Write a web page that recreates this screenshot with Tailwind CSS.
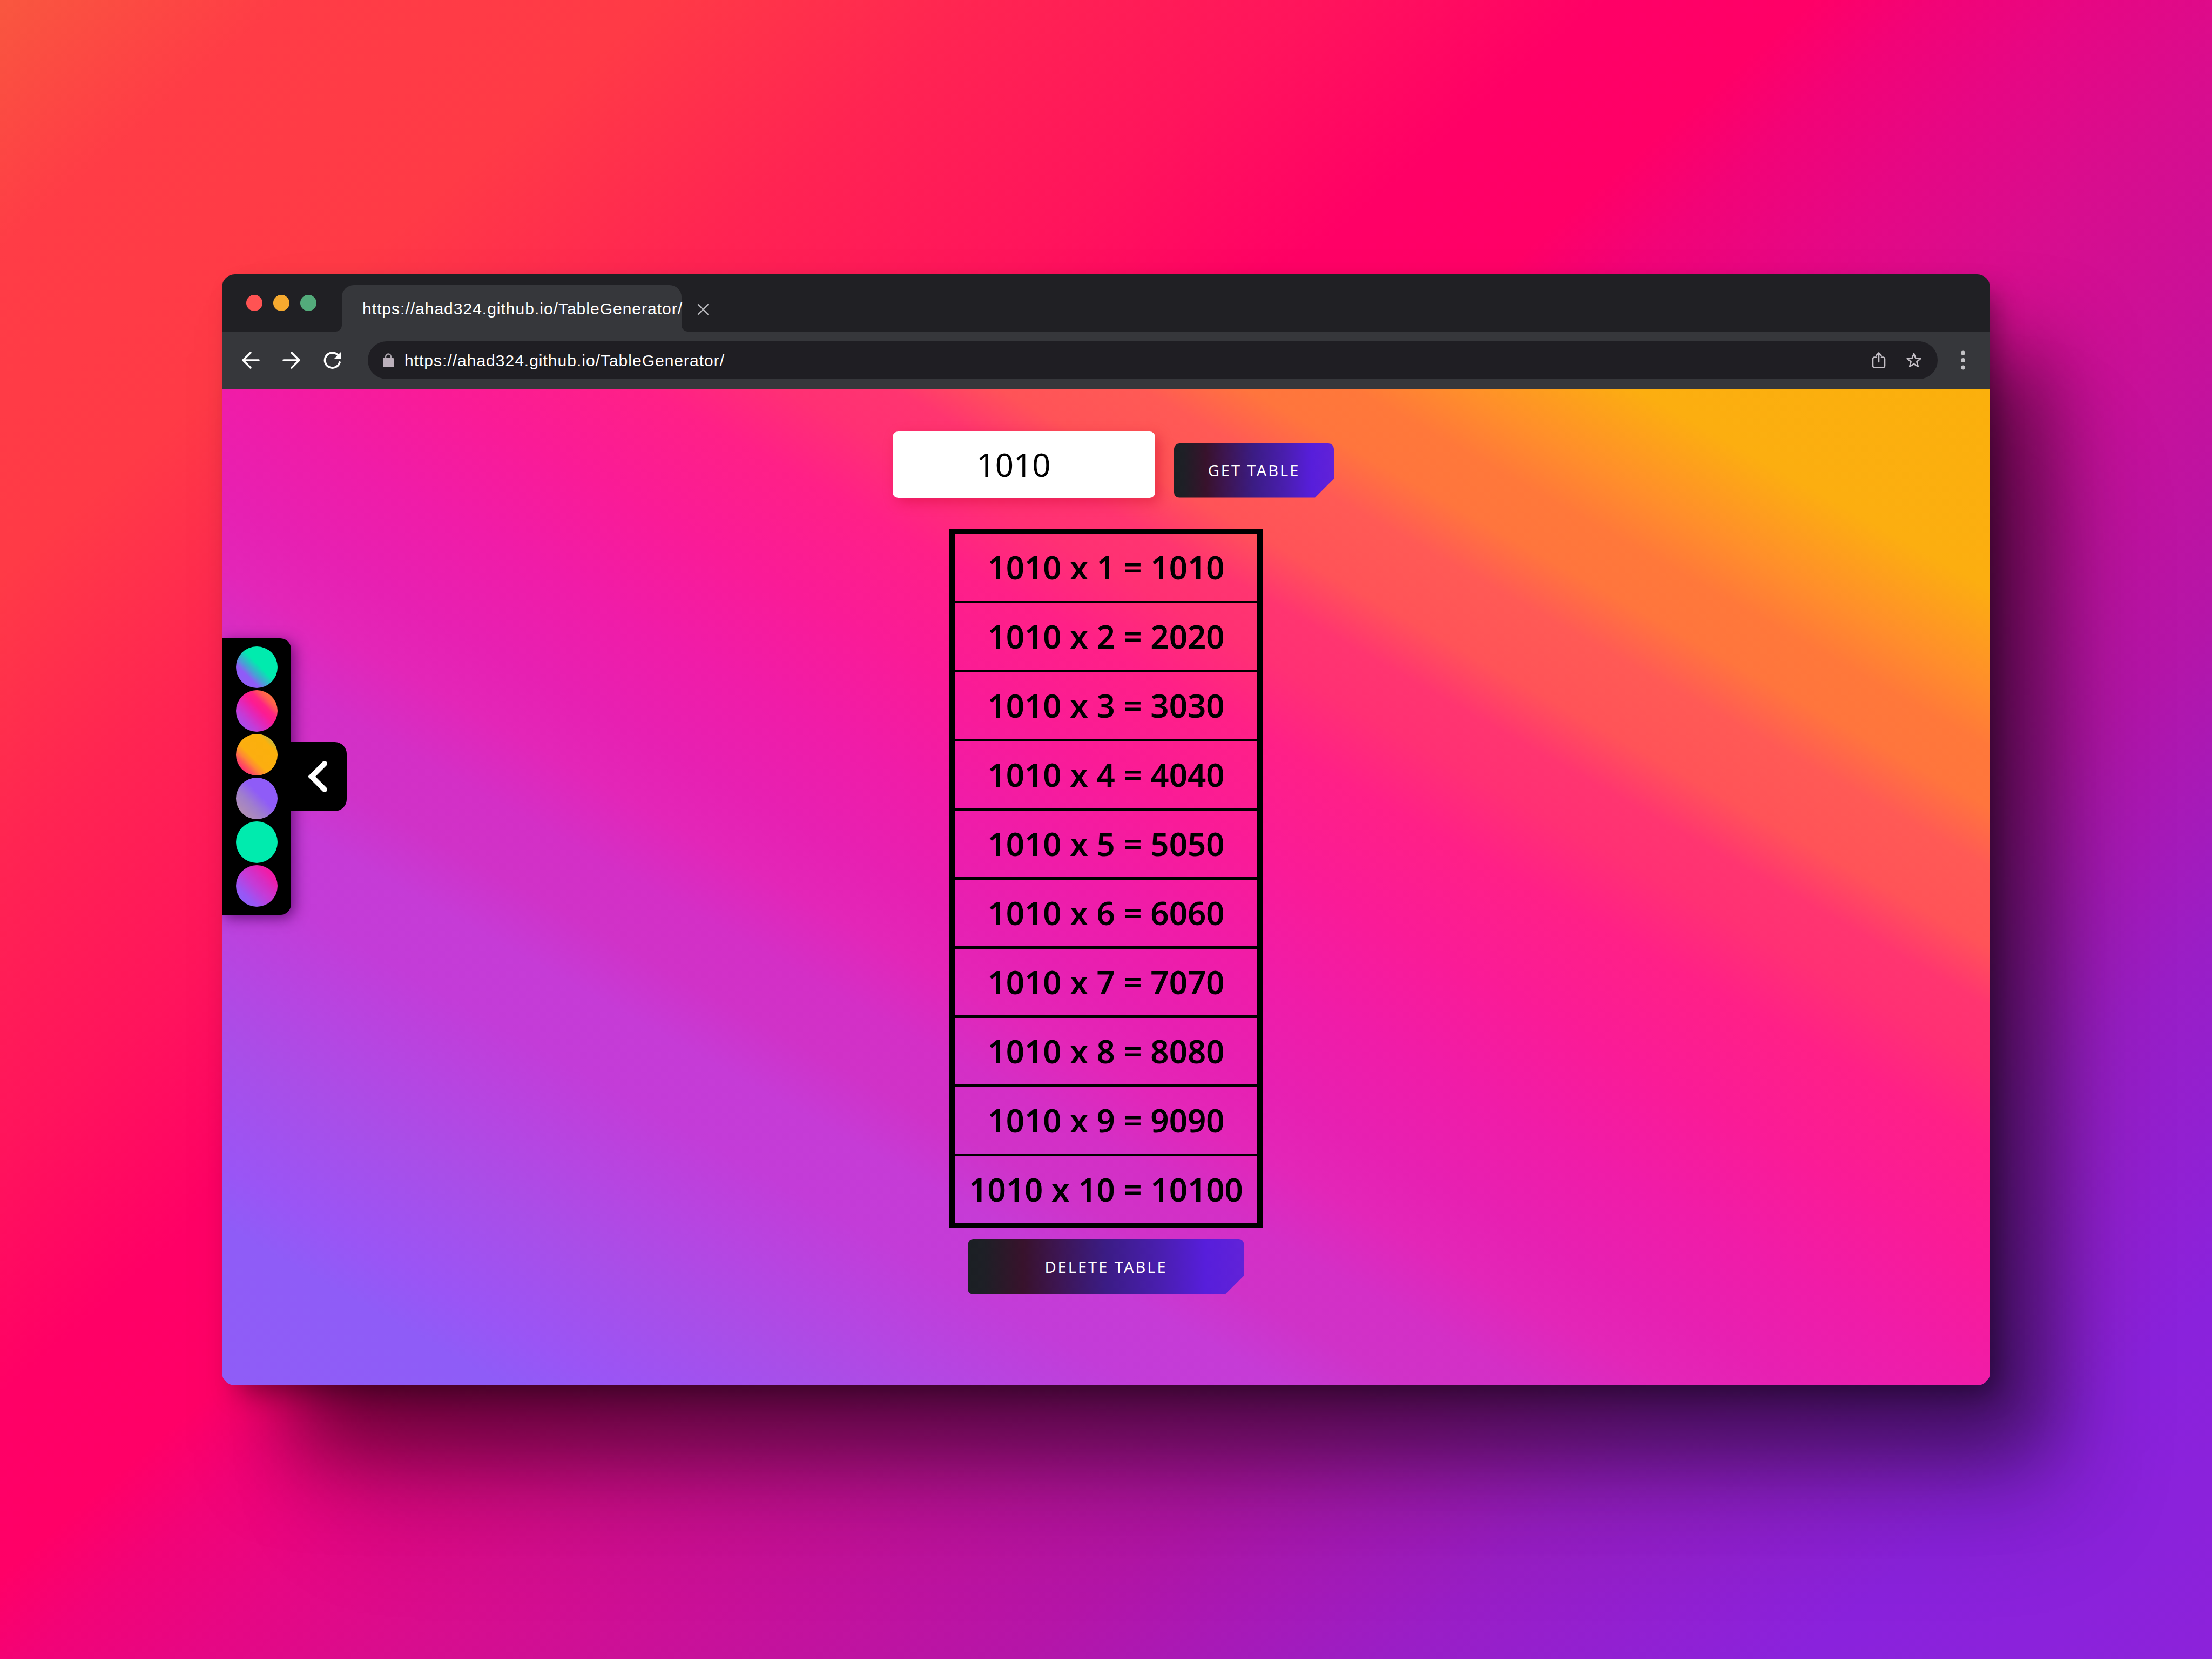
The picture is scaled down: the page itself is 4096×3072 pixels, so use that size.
<!DOCTYPE html>
<html lang="en">
<head>
<meta charset="utf-8">
<title>Table Generator</title>
<script src="https://cdn.jsdelivr.net/npm/@tailwindcss/browser@4"></script>
</head>
<body class="flex min-h-screen items-center px-[411px] font-['Noto_Sans',sans-serif] bg-[linear-gradient(139deg,#f9573f_0%,#ff3c46_7%,#ff3a46_16%,#ff2452_24%,#ff145c_32%,#ff0066_39%,#ff0067_44%,#f20377_47%,#e60784_51%,#d80d8e_56%,#b515a8_71%,#9a1ec6_80%,#8a22dc_90%,#8c22da_100%)]">
<div class="flex w-full flex-col overflow-hidden rounded-[24px] shadow-[20px_24px_50px_-10px_rgba(0,0,0,0.4),115px_135px_160px_-10px_rgba(0,0,0,0.5),180px_270px_200px_-30px_rgba(0,0,0,0.14)]">

  <header class="flex h-[106px] items-start bg-[#202024] pt-5 pl-[45px] font-['Liberation_Sans',sans-serif]">
    <div class="flex gap-5 pt-[18px]">
      <span class="size-[30px] rounded-full bg-[#ff5353]"></span>
      <span class="size-[30px] rounded-full bg-[#f5a92f]"></span>
      <span class="size-[30px] rounded-full bg-[#53ab7b]"></span>
    </div>
    <div class="relative ml-[47px] flex h-[86px] w-[629px] items-center rounded-t-[22px] bg-[#36373b] pt-[2px] pl-[38px]">
      <svg class="absolute bottom-0 -left-3 size-3" viewBox="0 0 12 12"><path d="M12 0v12H0A12 12 0 0 0 12 0Z" fill="#36373b"/></svg>
      <svg class="absolute -right-3 bottom-0 size-3" viewBox="0 0 12 12"><path d="M0 0v12h12A12 12 0 0 1 0 0Z" fill="#36373b"/></svg>
      <span class="whitespace-nowrap text-[30px] leading-[34px] tracking-[1px] text-white">https://ahad324.github.io/TableGenerator/</span>
    </div>
    <button class="ml-[29px] mt-[34px]" aria-label="Close tab">
      <svg class="size-[22px]" viewBox="0 0 22 22" fill="none" stroke="#b9b9bd" stroke-width="2.4" stroke-linecap="round"><path d="M2 2l18 18M20 2L2 20"/></svg>
    </button>
  </header>

  <nav class="flex h-[107px] items-center border-b border-[#8a8a8e] bg-[#36373b] font-['Liberation_Sans',sans-serif]" aria-label="Browser toolbar">
    <div class="flex gap-[42px] pl-[36px]">
      <button aria-label="Back"><svg class="size-[34px]" viewBox="0 0 34 34" fill="none" stroke="#fff" stroke-width="3.6" stroke-linecap="round" stroke-linejoin="round"><path d="M32 17H4M17 3L3 17l14 14"/></svg></button>
      <button aria-label="Forward"><svg class="size-[34px]" viewBox="0 0 34 34" fill="none" stroke="#fff" stroke-width="3.6" stroke-linecap="round" stroke-linejoin="round"><path d="M2 17h28M17 3l14 14-14 14"/></svg></button>
      <button aria-label="Reload"><svg class="size-[34px]" viewBox="0 0 34 34" fill="none"><path d="M30 21A14 14 0 1 1 26.500 7.200" stroke="#fff" stroke-width="3.800" stroke-linecap="round"/><path d="M33 1v14H19Z" fill="#fff"/></svg></button>
    </div>
    <div class="ml-12 flex h-[70px] flex-1 items-center rounded-full bg-[#1f1e23] pr-[29px] pl-[28px]">
      <svg class="h-[26px] w-[20px]" viewBox="0 0 20 26"><path d="M5 11V7a5 5.500 0 0 1 10 0v4" fill="none" stroke="#a9a3aa" stroke-width="2.400"/><rect x="0" y="9" width="20" height="17" rx="1" fill="#bbb0bb"/></svg>
      <input class="ml-[20px] flex-1 bg-transparent pt-[2px] text-[30px] leading-[34px] tracking-[1px] text-white outline-none" type="text" aria-label="Address" value="https://ahad324.github.io/TableGenerator/">
      <button class="mr-[37px]" aria-label="Share"><svg class="h-[30px] w-[26px]" viewBox="0 0 26 30" fill="none" stroke="#c4bfc6" stroke-width="2.600" stroke-linecap="round" stroke-linejoin="round"><path d="M8 9.500H5A3 3 0 0 0 2 12.500v13A3 3 0 0 0 5 28.500h16a3 3 0 0 0 3-3v-13a3 3 0 0 0-3-3h-3M13 18V2M8.500 6L13 1.500 17.500 6"/></svg></button>
      <button aria-label="Bookmark"><svg class="size-[30px]" viewBox="0 0 30 30" fill="none" stroke="#c4bfc6" stroke-width="2.700" stroke-linejoin="round"><path d="M15 3l3.400 8.300 9 .7-6.900 5.800 2.200 8.800L15 21.800l-7.700 4.800 2.200-8.800L2.600 12l9-.7Z"/></svg></button>
    </div>
    <button class="mr-[45px] ml-[42px]" aria-label="Menu"><svg class="h-[36px] w-[10px]" viewBox="0 0 10 36" fill="#c4c3c7"><circle cx="5" cy="4.500" r="4"/><circle cx="5" cy="18" r="4"/><circle cx="5" cy="31.500" r="4"/></svg></button>
  </nav>

  <main class="relative flex flex-col items-center pt-[78px] pb-[168px] bg-[linear-gradient(to_top_right,#8f5df7_0%,#8f5cf7_8%,#9a55f5_11%,#a94ee8_17%,#b546e2_21%,#c33cd8_26%,#c63bd6_30%,#d032c8_33.500%,#d42fc6_37%,#e326b8_41%,#e720b2_44.500%,#f01ca8_50%,#fa1b97_56%,#ff2087_62%,#ff3074_66%,#ff3570_69%,#ff5358_72%,#ff5a55_76%,#ff753d_79%,#ff783a_82%,#ff8e2b_85%,#fcae10_90%,#fbb00c_100%)]">
    <form class="flex items-end gap-[35px] pl-[27px]">
      <input class="h-[123px] w-[486px] rounded-[10px] bg-white pr-[38px] text-center text-[60px] text-black shadow-[8px_8px_24px_rgba(200,0,40,0.4)] outline-none" type="text" inputmode="numeric" aria-label="Number" value="1010">
      <button type="button" class="h-[101px] w-[296px] rounded-[10px] bg-[linear-gradient(90deg,#1b2024_0%,#1e1f26_6%,#38122c_20%,#3d1550_32%,#3b1c85_50%,#4a1eb0_70%,#571edb_86%,#6122d8_100%)] text-[29px] tracking-[3px] text-white [clip-path:polygon(0_0,100%_0,100%_calc(100%-35px),calc(100%-35px)_100%,0_100%)]">GET TABLE</button>
    </form>
    <table class="mt-[57px] w-[580px] border-separate border-spacing-0 border-[10px] border-black text-center text-[60px] font-semibold text-black">
      <tbody id="rows"></tbody>
    </table>
    <button type="button" class="mt-[21px] h-[102px] w-[512px] rounded-[10px] bg-[linear-gradient(90deg,#1b2024_0%,#1e1f26_6%,#38122c_20%,#3d1550_32%,#3b1c85_50%,#4a1eb0_70%,#571edb_86%,#6122d8_100%)] text-[29px] tracking-[3px] text-white [clip-path:polygon(0_0,100%_0,100%_calc(100%-35px),calc(100%-35px)_100%,0_100%)]">DELETE TABLE</button>

    <aside class="absolute top-1/4 left-0 flex items-center" aria-label="Themes">
      <div class="flex h-[512px] w-[128px] flex-col items-center justify-center gap-1 rounded-r-[20px] bg-black shadow-[6px_6px_26px_rgba(70,0,90,0.7)]">
        <button aria-label="Theme 1" class="size-[77px] rounded-full bg-[linear-gradient(to_top_right,#8f5cf7_20%,#8f5cf7_28%,#4f9bd8_38%,#00ebae_55%)]"></button>
        <button aria-label="Theme 2" class="size-[77px] rounded-full bg-[linear-gradient(to_top_right,#a050ee_10%,#c33cd8_28%,#e326b8_43%,#fc1b92_56%,#ff2482_66%,#ff5a55_76%,#ff783a_88%)]"></button>
        <button aria-label="Theme 3" class="size-[77px] rounded-full bg-[linear-gradient(to_top_right,#ff3570_16%,#ff5a55_24%,#ff8a34_32%,#fcae10_42%,#fbb00c_76%,#c8b83c_86%)]"></button>
        <button aria-label="Theme 4" class="size-[77px] rounded-full bg-[linear-gradient(to_top_right,#b08fb4_14%,#a07fcc_36%,#8f5cf7_58%)]"></button>
        <button aria-label="Theme 5" class="size-[77px] rounded-full bg-[#00ebae]"></button>
        <button aria-label="Theme 6" class="size-[77px] rounded-full bg-[linear-gradient(to_top_right,#8f5cf7_16%,#9a55f5_26%,#c33cd8_48%,#d42fc6_62%,#f01ca8_80%)]"></button>
      </div>
      <button class="relative flex h-[128px] w-[103px] items-center justify-center rounded-r-[22px] bg-black" aria-label="Hide themes">
        <svg class="h-[60px] w-[40px]" viewBox="0 0 40 60" fill="none" stroke="#fff" stroke-width="10" stroke-linecap="round"><path d="M30 6L6 30l24 24"/></svg>
      </button>
    </aside>
  </main>
</div>
<script>
  const n = 1010;
  const rows = document.getElementById('rows');
  for (let i = 1; i <= 10; i++) {
    const td = rows.insertRow().insertCell();
    td.className = i < 10 ? 'h-[128px] border-b-[5px] border-black p-0 leading-[80px]' : 'h-[123px] p-0 leading-[80px]';
    td.textContent = `${n} x ${i} = ${n * i}`;
  }
</script>
</body>
</html>
